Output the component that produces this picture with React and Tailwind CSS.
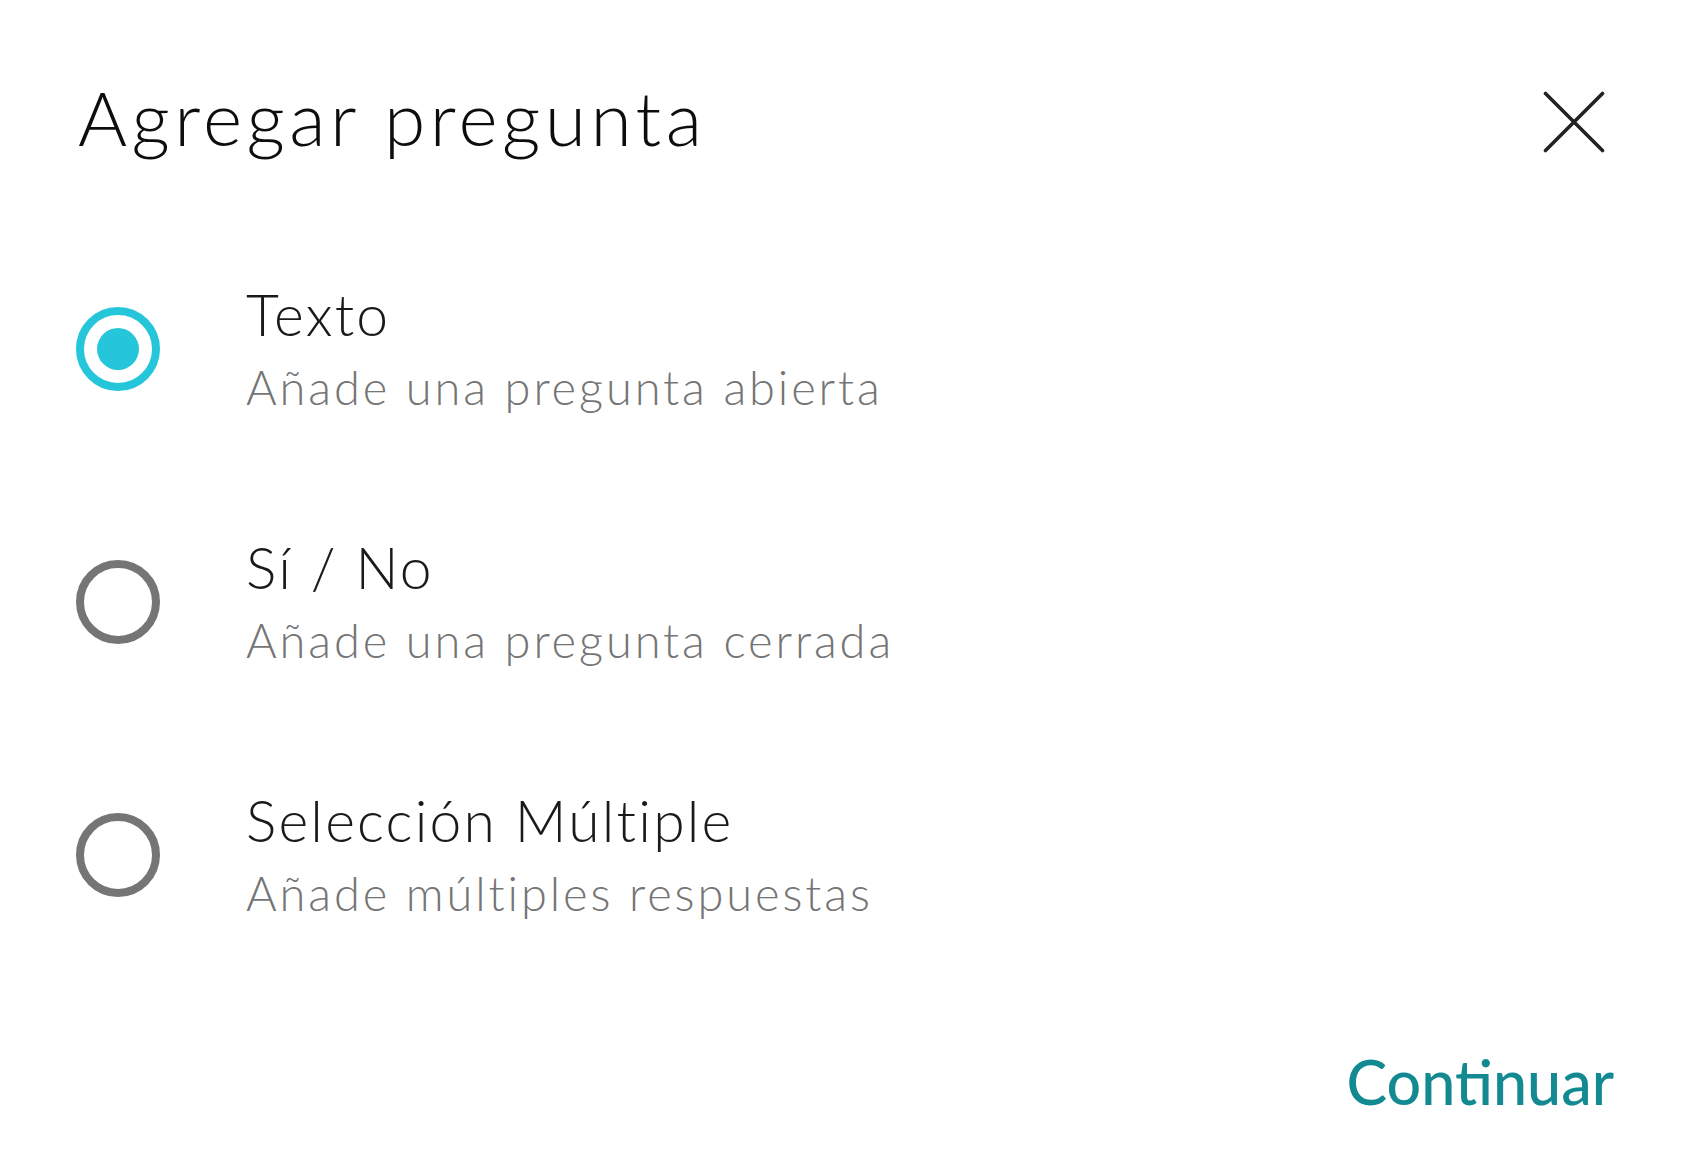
import { useState } from 'react';

const options = [
  { id: 'texto', title: 'Texto', hint: 'Añade una pregunta abierta' },
  { id: 'sino', title: 'Sí / No', hint: 'Añade una pregunta cerrada' },
  { id: 'multiple', title: 'Selección Múltiple', hint: 'Añade múltiples respuestas' },
];

function Radio({ checked }) {
  return (
    <span
      className={`flex h-[84px] w-[84px] shrink-0 items-center justify-center rounded-full border-[8px] ${
        checked ? 'border-[#26c6da]' : 'border-[#757575]'
      }`}
    >
      {checked && <span className="h-[42px] w-[42px] rounded-full bg-[#26c6da]" />}
    </span>
  );
}

export default function App() {
  const [selected, setSelected] = useState('texto');

  return (
    <div className="min-h-[1168px] w-full bg-white font-['Lato','Noto_Sans',sans-serif]">
      <div className="flex items-start justify-between pl-[78px] pr-[89px] pt-[80px]">
        <h1 className="text-[75px] leading-none font-light tracking-[4.4px] text-[#0d0d0d]">Agregar pregunta</h1>
        <button className="mt-[11px] text-[#222222]" aria-label="Cerrar">
          <svg width="62" height="62" viewBox="0 0 62 62" fill="none">
            <path d="M2.5 2.5L59.5 59.5M59.5 2.5L2.5 59.5" stroke="currentColor" strokeWidth="3.6" strokeLinecap="round" />
          </svg>
        </button>
      </div>

      <div className="mt-[131px] flex flex-col gap-[128px] pl-[76px]">
        {options.map((opt) => (
          <button key={opt.id} onClick={() => setSelected(opt.id)} className="flex items-center text-left">
            <Radio checked={selected === opt.id} />
            <span className="ml-[86px] flex flex-col">
              <span className="text-[57px] leading-none font-light tracking-[2.2px] text-[#1a1a1a]">{opt.title}</span>
              <span className="mt-[21px] text-[47px] leading-none font-light tracking-[2.9px] text-[#757575]">
                {opt.hint}
              </span>
            </span>
          </button>
        ))}
      </div>

      <div className="mt-[134px] flex justify-end pr-[80px]">
        <button className="text-[61px] leading-none font-medium text-[#138a91]">Continuar</button>
      </div>
    </div>
  );
}
